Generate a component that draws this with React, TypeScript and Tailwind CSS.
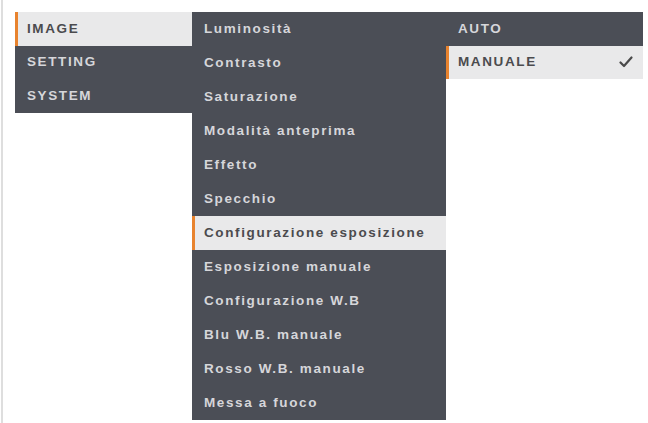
const mainMenu = ['IMAGE', 'SETTING', 'SYSTEM'];

const imageMenu = [
  'Luminosità',
  'Contrasto',
  'Saturazione',
  'Modalità anteprima',
  'Effetto',
  'Specchio',
  'Configurazione esposizione',
  'Esposizione manuale',
  'Configurazione W.B',
  'Blu W.B. manuale',
  'Rosso W.B. manuale',
  'Messa a fuoco',
];

const exposureMenu = ['AUTO', 'MANUALE'];

function Check() {
  return (
    <svg width="14" height="12" viewBox="0 0 14 12" fill="none">
      <path d="M1.5 6.5 L5 10 L12.5 1.5" stroke="#4a4a4a" strokeWidth="2.2" strokeLinecap="round" strokeLinejoin="round" />
    </svg>
  );
}

type RowProps = {
  label: string;
  active?: boolean;
  height: string;
  checked?: boolean;
};

function Row({ label, active, height, checked }: RowProps) {
  return (
    <div
      className={`relative flex items-center justify-between pl-[12px] pr-[10px] ${height} ${
        active ? 'bg-[#e9e9ea] text-[#4b4b4e]' : 'text-[#d6d6da]'
      }`}
    >
      {active && <div className="absolute left-0 top-0 h-full w-[3px] bg-[#e8832e]" />}
      <span className="tracking-[0.12em]">{label}</span>
      {checked && <Check />}
    </div>
  );
}

export default function App() {
  return (
    <div className="h-[423px] w-[648px] overflow-hidden bg-white font-['Liberation_Sans',Arial,sans-serif] text-[13.5px] font-bold">
      <div className="ml-[1px] flex h-full items-start border-l-2 border-[#dedede] pl-[12px] pt-[12px]">
        <div className="w-[177px] bg-[#4b4e56]">
          {mainMenu.map((m, i) => (
            <Row key={m} label={m} active={i === 0} height="h-[33.5px]" />
          ))}
        </div>
        <div className="w-[254px] bg-[#4b4e56]">
          {imageMenu.map((m, i) => (
            <Row key={m} label={m} active={i === 6} height="h-[34px]" />
          ))}
        </div>
        <div className="w-[197px] bg-[#4b4e56]">
          {exposureMenu.map((m, i) => (
            <Row key={m} label={m} active={i === 1} checked={i === 1} height="h-[33.5px]" />
          ))}
        </div>
      </div>
    </div>
  );
}
